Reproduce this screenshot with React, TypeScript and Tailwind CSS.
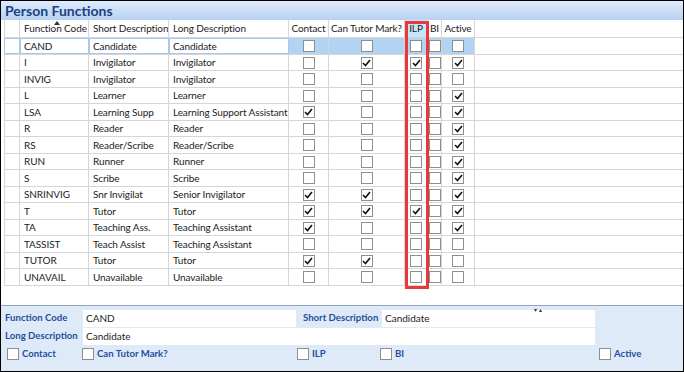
import React from "react";

type Row = {
  code: string;
  short: string;
  long: string;
  flags: [boolean, boolean, boolean, boolean, boolean];
};

const ROWS: Row[] = [
  { code: "CAND", short: "Candidate", long: "Candidate", flags: [false, false, false, false, false] },
  { code: "I", short: "Invigilator", long: "Invigilator", flags: [false, true, true, false, true] },
  { code: "INVIG", short: "Invigilator", long: "Invigilator", flags: [false, false, false, false, false] },
  { code: "L", short: "Learner", long: "Learner", flags: [false, false, false, false, true] },
  { code: "LSA", short: "Learning Supp", long: "Learning Support Assistant", flags: [true, false, false, false, true] },
  { code: "R", short: "Reader", long: "Reader", flags: [false, false, false, false, true] },
  { code: "RS", short: "Reader/Scribe", long: "Reader/Scribe", flags: [false, false, false, false, true] },
  { code: "RUN", short: "Runner", long: "Runner", flags: [false, false, false, false, true] },
  { code: "S", short: "Scribe", long: "Scribe", flags: [false, false, false, false, true] },
  { code: "SNRINVIG", short: "Snr Invigilat", long: "Senior Invigilator", flags: [true, true, false, false, true] },
  { code: "T", short: "Tutor", long: "Tutor", flags: [true, true, true, false, true] },
  { code: "TA", short: "Teaching Ass.", long: "Teaching Assistant", flags: [true, false, false, false, true] },
  { code: "TASSIST", short: "Teach Assist", long: "Teaching Assistant", flags: [false, false, false, false, false] },
  { code: "TUTOR", short: "Tutor", long: "Tutor", flags: [true, true, false, false, false] },
  { code: "UNAVAIL", short: "Unavailable", long: "Unavailable", flags: [false, false, false, false, false] },
];

// widths of the flag columns, in order: Contact, Can Tutor Mark?, ILP, BI, Active
const FLAG_W = ["w-[40px]", "w-[76px]", "w-[23px]", "w-[14px]", "w-[33px]"];

function Box({ checked }: { checked?: boolean }) {
  return (
    <span className="flex h-[12px] w-[12px] shrink-0 items-center justify-center border border-[#8e8e8e] bg-white">
      {checked ? (
        <svg width="9" height="8" viewBox="0 0 9 8">
          <path d="M1 4 L3.5 6.5 L8 1" fill="none" stroke="#111" strokeWidth="1.6" />
        </svg>
      ) : null}
    </span>
  );
}

const cell = "flex shrink-0 items-center overflow-hidden whitespace-nowrap border-r border-[#d6d6d6]";
const label = "text-[9.6px] font-bold text-[#1f4f9c]";

export default function App() {
  return (
    <div className="relative flex h-[372px] w-[684px] flex-col border border-black bg-white font-['Lato','Noto_Sans',sans-serif] text-[10px] text-[#222]">
      {/* title bar */}
      <div className="flex h-[19px] shrink-0 items-center bg-gradient-to-b from-[#dfebfb] to-[#b7d2f2] pl-[4px] text-[14px] font-bold text-[#1b3f80]">
        Person Functions
      </div>

      {/* grid */}
      <div className="flex flex-1 flex-col pl-[3px] tracking-[-0.1px]">
        <div className="flex h-[18px] border-b border-[#d6d6d6]">
          <div className={`${cell} w-[16px] border-l`} />
          <div className={`${cell} relative w-[69px] pl-[4px]`}>
            <span className="absolute left-[34px] top-[1px] h-0 w-0 border-x-[3px] border-b-[4px] border-x-transparent border-b-[#333]" />
            Function Code
          </div>
          <div className={`${cell} w-[80px] pl-[4px]`}>Short Description</div>
          <div className={`${cell} w-[120px] pl-[4px]`}>Long Description</div>
          <div className={`${cell} w-[40px] justify-center`}>Contact</div>
          <div className={`${cell} w-[76px] justify-center`}>Can Tutor Mark?</div>
          <div className={`${cell} w-[23px] justify-center bg-[#c6e7f8]`}>ILP</div>
          <div className={`${cell} w-[14px] justify-center`}>BI</div>
          <div className={`${cell} w-[33px] justify-center`}>Active</div>
          <div className="flex-1" />
        </div>

        {ROWS.map((r, i) => {
          const sel = i === 0;
          const h = i % 2 === 0 ? "h-[17px]" : "h-[16px]";
          const txt = sel ? "bg-white outline outline-1 -outline-offset-1 outline-[#a9c9ec]" : "";
          return (
            <div key={r.code} className={`flex ${h} border-b border-[#d6d6d6]`}>
              <div className={`${cell} w-[16px] border-l ${txt}`} />
              <div className={`${cell} w-[69px] pl-[4px] ${txt}`}>{r.code}</div>
              <div className={`${cell} w-[80px] pl-[4px] ${txt}`}>{r.short}</div>
              <div className={`${cell} w-[120px] pl-[4px] ${txt}`}>{r.long}</div>
              {r.flags.map((f, k) => (
                <div key={k} className={`${cell} ${FLAG_W[k]} justify-center ${sel ? "bg-[#b3d3f3]" : ""}`}>
                  <Box checked={f} />
                </div>
              ))}
              <div className="flex-1" />
            </div>
          );
        })}
      </div>

      {/* detail panel */}
      <div className="relative flex h-[66px] shrink-0 flex-col whitespace-nowrap border-t border-[#8ea4bf] bg-[#dfeaf9] px-[4px] pt-[4px] text-[10px]">
        <span className="absolute left-[533px] top-[1px] text-[6px] leading-none text-[#333]">▾ ▴</span>
        <div className="flex h-[17px] items-center">
          <span className={`w-[78px] ${label}`}>Function Code</span>
          <div className="flex h-[17px] w-[213px] items-center bg-white pl-[3px]">CAND</div>
          <span className={`ml-[7px] w-[79px] ${label}`}>Short Description</span>
          <div className="flex h-[17px] w-[213px] items-center bg-white pl-[3px]">Candidate</div>
        </div>
        <div className="mt-[1px] flex h-[17px] items-center">
          <span className={`w-[78px] ${label}`}>Long Description</span>
          <div className="flex h-[17px] w-[512px] items-center bg-white pl-[3px]">Candidate</div>
        </div>
        <div className={`mt-[1px] flex h-[16px] items-center ${label}`}>
          <div className="flex w-[77px] items-center gap-[3px] pl-[2px]"><Box />Contact</div>
          <div className="flex w-[215px] items-center gap-[3px]"><Box />Can Tutor Mark?</div>
          <div className="flex w-[83px] items-center gap-[3px]"><Box />ILP</div>
          <div className="flex w-[219px] items-center gap-[3px]"><Box />BI</div>
          <div className="flex items-center gap-[3px]"><Box />Active</div>
        </div>
      </div>

      {/* highlight annotation around ILP column */}
      <div className="pointer-events-none absolute left-[404px] top-[20px] h-[268px] w-[24px] border-[3px] border-[#e8383c]" />
    </div>
  );
}
